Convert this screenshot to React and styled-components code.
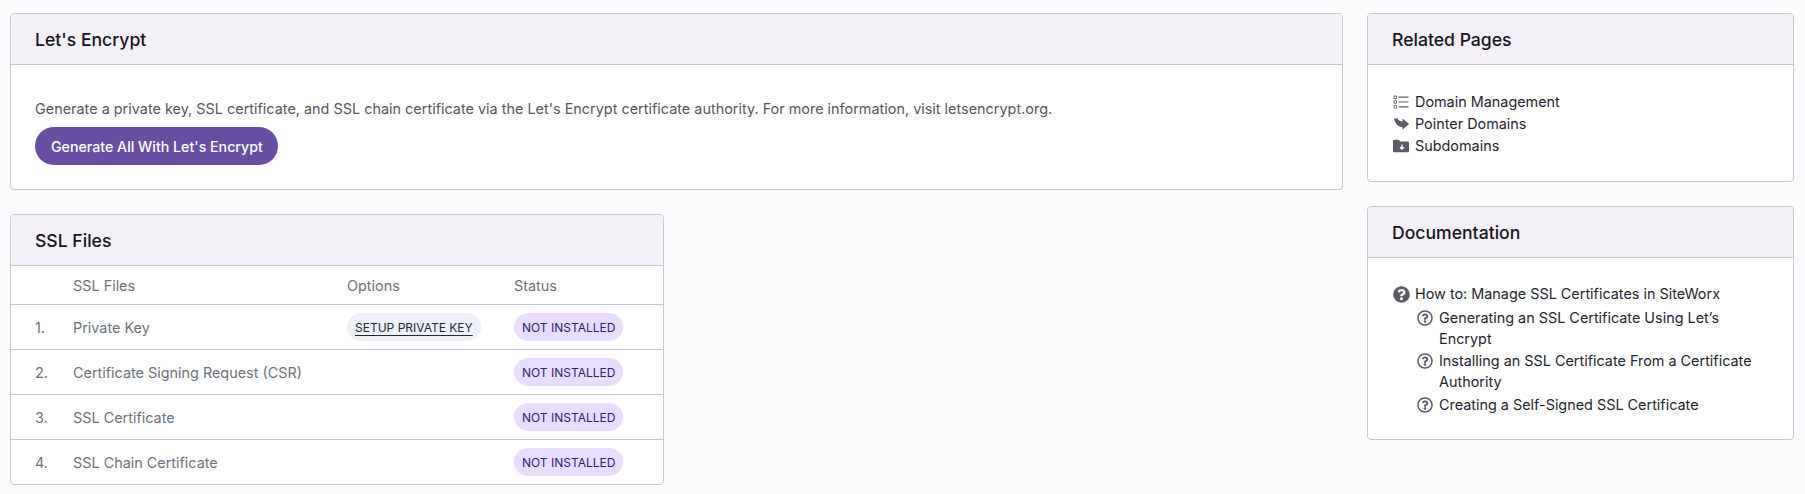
import React from 'react'
import styled, { createGlobalStyle } from 'styled-components'
import { FaQuestionCircle, FaRegQuestionCircle } from 'react-icons/fa'

const GlobalStyle = createGlobalStyle`
    html, body {
        margin: 0;
        padding: 0;
        background: #fefbff;
    }
    body {
        font-family: Inter, "Liberation Sans", sans-serif;
        font-size: 14.4px;
        color: #1f2430;
    }
`

const Page = styled.div`
    display: grid;
    grid-template-columns: 1333px 427px;
    column-gap: 24px;
    padding: 13px 11px 0 10px;
    align-items: start;
`

const Column = styled.div`
    display: flex;
    flex-direction: column;
    align-items: flex-start;
    gap: 24px;
`

const Card = styled.section`
    box-sizing: border-box;
    width: ${props => props.$width || '100%'};
    background: #fff;
    border: 1px solid #c9c6cd;
    border-radius: 4px;
    overflow: hidden;
`

const CardHeader = styled.h2`
    box-sizing: border-box;
    height: 51px;
    margin: 0;
    padding: 0 24px;
    display: flex;
    align-items: center;
    background: #f4f0f7;
    border-bottom: 1px solid #c9c6cd;
    font-size: 17.6px;
    font-weight: 500;
    color: #17151c;
`

const CardBody = styled.div`
    padding: ${props => props.$padding};
`

const Intro = styled.p`
    margin: 0 0 8px;
    line-height: 20px;
    letter-spacing: 0.012px;
    color: #565560;
`

const PrimaryButton = styled.button`
    display: block;
    height: 38px;
    padding: 0 15px 0 16px;
    border: 0;
    border-radius: 19px;
    background: #684fa3;
    color: #fff;
    font: 500 14.2px Inter, "Liberation Sans", sans-serif;
`

const Table = styled.table`
    width: 100%;
    border-collapse: collapse;
    table-layout: fixed;
`

const HeadCell = styled.th`
    height: 38px;
    padding: 0;
    width: ${props => (props.$width ? `${props.$width}px` : 'auto')};
    text-align: left;
    font-weight: 400;
    color: #6b7280;
`

const Row = styled.tr`
    border-top: 1px solid #c9c6cd;
`

const Cell = styled.td`
    height: 44px;
    padding: 0;
    color: #6b7280;
`

const NumberCell = styled(Cell)`
    padding-left: 24px;
`

const Pill = styled.span`
    display: inline-block;
    height: 28px;
    line-height: 29px;
    padding: 0 8px;
    border-radius: 14px;
    font-size: 12px;
    vertical-align: middle;
    background: ${props => props.$bg};
    color: ${props => props.$color};
`

const PillLink = styled.a`
    color: inherit;
    text-decoration: underline;
    text-decoration-thickness: 1px;
    text-underline-offset: 3px;
`

const LinkList = styled.ul`
    list-style: none;
    margin: 0;
    padding: 0;
    line-height: 22px;
`

const LinkItem = styled.li`
    display: flex;
    align-items: flex-start;
    margin: ${props => (props.$nested ? '1.5px 0 0 24px' : '0')};
    line-height: ${props => (props.$nested ? 21 : 22)}px;
`

const IconSlot = styled.span`
    flex: none;
    width: 18px;
    height: 22px;
    margin-right: 5px;
    display: flex;
    align-items: center;
    justify-content: center;
    color: #5c5a64;
    svg {
        display: block;
    }
`

const ListIcon = () => (
    <svg width="16" height="14" viewBox="0 0 16 14" fill="none" stroke="currentColor">
        <rect x="1" y="1" width="2.4" height="2.4" strokeWidth="0.8" />
        <rect x="1" y="5.8" width="2.4" height="2.4" strokeWidth="0.8" />
        <rect x="1" y="10.6" width="2.4" height="2.4" strokeWidth="0.8" />
        <path d="M5.5 2.2H15.5M5.5 7H15.5M5.5 11.8H15.5" strokeWidth="1.2" />
    </svg>
)

const PointerIcon = () => (
    <svg width="15" height="13" viewBox="0 0 14 12">
        <path fill="currentColor" d="M0 .5H3.5C4 2.5 6 3.2 8 3.2V.5L14 5.5L8 11V8.5C4 8.5 1 5.5 0 .5Z" />
    </svg>
)

const FolderIcon = () => (
    <svg width="16" height="14" viewBox="0 0 16 14">
        <path fill="currentColor" d="M0 2.2C0 1.4.6.8 1.4.8h4.2l1.7 1.7h7.3c.8 0 1.4.6 1.4 1.4v8c0 .8-.6 1.3-1.4 1.3H1.4C.6 13.2 0 12.7 0 11.9z" />
        <path fill="none" stroke="#fff" strokeWidth="1.3" d="M9 5.6v4.2M7.1 8.2 9 10.1l1.9-1.9" />
    </svg>
)

const sslFiles = [
    { name: 'Private Key', option: 'SETUP PRIVATE KEY' },
    { name: 'Certificate Signing Request (CSR)' },
    { name: 'SSL Certificate' },
    { name: 'SSL Chain Certificate' }
]

const relatedPages = [
    { label: 'Domain Management', icon: <ListIcon /> },
    { label: 'Pointer Domains', icon: <PointerIcon /> },
    { label: 'Subdomains', icon: <FolderIcon /> }
]

const docs = [
    'Generating an SSL Certificate Using Let’s Encrypt',
    'Installing an SSL Certificate From a Certificate Authority',
    'Creating a Self-Signed SSL Certificate'
]

export default function App() {
    return (
        <Page>
            <GlobalStyle />
            <Column>
                <Card>
                    <CardHeader>Let's Encrypt</CardHeader>
                    <CardBody $padding="34px 24px 24px">
                        <Intro>Generate a private key, SSL certificate, and SSL chain certificate via the Let's Encrypt certificate authority. For more information, visit letsencrypt.org.</Intro>
                        <PrimaryButton>Generate All With Let's Encrypt</PrimaryButton>
                    </CardBody>
                </Card>
                <Card $width="654px">
                    <CardHeader>SSL Files</CardHeader>
                    <Table>
                        <thead>
                            <tr>
                                <HeadCell $width={62} />
                                <HeadCell $width={274}>SSL Files</HeadCell>
                                <HeadCell $width={167}>Options</HeadCell>
                                <HeadCell>Status</HeadCell>
                            </tr>
                        </thead>
                        <tbody>
                            {sslFiles.map((file, i) => (
                                <Row key={file.name}>
                                    <NumberCell>{i + 1}.</NumberCell>
                                    <Cell>{file.name}</Cell>
                                    <Cell>
                                        {file.option && (
                                            <Pill $bg="#edf0f6" $color="#1f2937">
                                                <PillLink>{file.option}</PillLink>
                                            </Pill>
                                        )}
                                    </Cell>
                                    <Cell>
                                        <Pill $bg="#e9ddff" $color="#2e1a78">NOT INSTALLED</Pill>
                                    </Cell>
                                </Row>
                            ))}
                        </tbody>
                    </Table>
                </Card>
            </Column>
            <Column>
                <Card>
                    <CardHeader>Related Pages</CardHeader>
                    <CardBody $padding="26px 24px 24px">
                        <LinkList>
                            {relatedPages.map(page => (
                                <LinkItem key={page.label}>
                                    <IconSlot>{page.icon}</IconSlot>
                                    {page.label}
                                </LinkItem>
                            ))}
                        </LinkList>
                    </CardBody>
                </Card>
                <Card>
                    <CardHeader>Documentation</CardHeader>
                    <CardBody $padding="25px 24px 23px">
                        <LinkList>
                            <LinkItem>
                                <IconSlot><FaQuestionCircle size={17} /></IconSlot>
                                How to: Manage SSL Certificates in SiteWorx
                            </LinkItem>
                            {docs.map(doc => (
                                <LinkItem key={doc} $nested>
                                    <IconSlot><FaRegQuestionCircle size={16} /></IconSlot>
                                    {doc}
                                </LinkItem>
                            ))}
                        </LinkList>
                    </CardBody>
                </Card>
            </Column>
        </Page>
    )
}
